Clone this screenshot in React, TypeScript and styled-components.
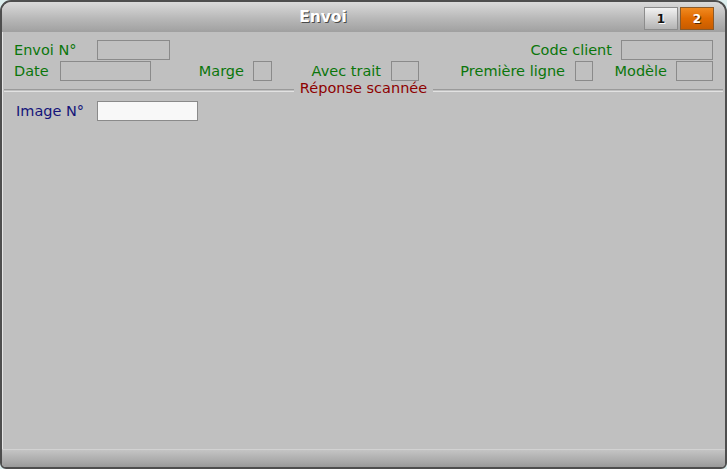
import { createGlobalStyle, styled } from "styled-components";

const GlobalStyle = createGlobalStyle`
  html, body {
    margin: 0;
    padding: 0;
    background: #dceeee;
  }
  body {
    font-family: "DejaVu Sans", Verdana, sans-serif;
  }
`;

const Window = styled.div`
  box-sizing: border-box;
  width: 727px;
  height: 469px;
  border: 2px solid #4e4e4e;
  border-radius: 11px 12px 6px 6px;
  background: #c0c0c0;
  display: flex;
  flex-direction: column;
  overflow: hidden;
  box-shadow: inset 1px 0 0 #e6e6e6;
`;

const TitleBar = styled.div`
  height: 30px;
  flex: none;
  display: flex;
  align-items: flex-start;
  background: linear-gradient(#dadada, #b8b8b8 55%, #a0a0a0);
`;

const Title = styled.div`
  flex: 1;
  text-align: center;
  font-family: "DejaVu Sans", Verdana, sans-serif;
  font-weight: bold;
  font-size: 15.5px;
  line-height: 31px;
  color: #ffffff;
  text-shadow: 1px 1px 0 #4a4a4a;
`;

const Tabs = styled.div`
  display: flex;
  gap: 2px;
  padding: 5px 11px 0 0;
`;

const Tab = styled.div<{ $active?: boolean }>`
  box-sizing: border-box;
  width: 34px;
  height: 23px;
  display: flex;
  align-items: center;
  justify-content: center;
  border: 1px solid ${(p) => (p.$active ? "#8a5a2a" : "#8c8c8c")};
  background: ${(p) =>
    p.$active
      ? "linear-gradient(#f08a20, #e06a00 50%, #c85c00)"
      : "linear-gradient(#f2f2f2, #d2d2d2 50%, #b4b4b4)"};
  font-family: "DejaVu Sans", Verdana, sans-serif;
  font-weight: bold;
  font-size: 12px;
  color: ${(p) => (p.$active ? "#ffffff" : "#111111")};
  text-shadow: ${(p) =>
    p.$active ? "1px 1px 0 #5a2a00" : "1px 1px 0 #ffffff"};
`;

const Body = styled.div`
  flex: 1;
  padding: 8px 12px 0 12px;
  display: flex;
  flex-direction: column;
`;

const Row = styled.div<{ $gap?: number }>`
  display: flex;
  height: 20px;
  margin-top: ${(p) => p.$gap ?? 0}px;
`;

const Label = styled.div<{ $w?: number; $color?: string; $right?: boolean; $pad?: number }>`
  box-sizing: border-box;
  width: ${(p) => (p.$w ? `${p.$w}px` : "auto")};
  flex: ${(p) => (p.$w ? "none" : "1")};
  font-size: 14.5px;
  line-height: 20px;
  white-space: nowrap;
  color: ${(p) => p.$color ?? "#0b760b"};
  text-align: ${(p) => (p.$right ? "right" : "left")};
  padding-right: ${(p) => (p.$right ? p.$pad ?? 9 : 0)}px;
  padding-left: ${(p) => (p.$right ? 0 : p.$pad ?? 0)}px;
`;

const Input = styled.div<{ $w: number; $white?: boolean }>`
  box-sizing: border-box;
  width: ${(p) => p.$w}px;
  height: 20px;
  flex: none;
  border: 1px solid #8a8a8a;
  background: ${(p) => (p.$white ? "#f8f8f8" : "transparent")};
`;

const Separator = styled.div`
  display: flex;
  align-items: flex-start;
  margin: 1px -10px 0 -10px;
  height: 12px;
`;

const Line = styled.div`
  flex: 1;
  height: 1px;
  margin-top: 7px;
  border-top: 1px solid #9a9a9a;
  border-bottom: 1px solid #e2e2e2;
`;

const SectionTitle = styled.div`
  font-size: 14.5px;
  line-height: 13px;
  color: #8e0000;
  padding: 0 6px;
  white-space: nowrap;
`;

const Footer = styled.div`
  height: 17px;
  flex: none;
  border-top: 1px solid #d2d2d2;
  background: linear-gradient(#c4c4c4, #a8a8a8 70%, #9a9a9a);
`;

export default function App() {
  return (
    <>
      <GlobalStyle />
      <Window>
        <TitleBar>
          <Title>Envoi</Title>
          <Tabs>
            <Tab>1</Tab>
            <Tab $active>2</Tab>
          </Tabs>
        </TitleBar>

        <Body>
          <Row>
            <Label $w={83}>Envoi N°</Label>
            <Input $w={73} />
            <Label $right>Code client</Label>
            <Input $w={92} />
          </Row>

          <Row $gap={1}>
            <Label $w={46}>Date</Label>
            <Input $w={91} />
            <Label $w={102} $right>Marge</Label>
            <Input $w={19} />
            <Label $w={119} $right $pad={10}>Avec trait</Label>
            <Input $w={28} />
            <Label $w={156} $right $pad={10}>Première ligne</Label>
            <Input $w={18} />
            <Label $w={83} $right>Modèle</Label>
            <Input $w={37} />
          </Row>

          <Separator>
            <Line />
            <SectionTitle>Réponse scannée</SectionTitle>
            <Line />
          </Separator>

          <Row $gap={7}>
            <Label $w={83} $pad={2} $color="#14147a">Image N°</Label>
            <Input $w={101} $white />
          </Row>
        </Body>

        <Footer />
      </Window>
    </>
  );
}
